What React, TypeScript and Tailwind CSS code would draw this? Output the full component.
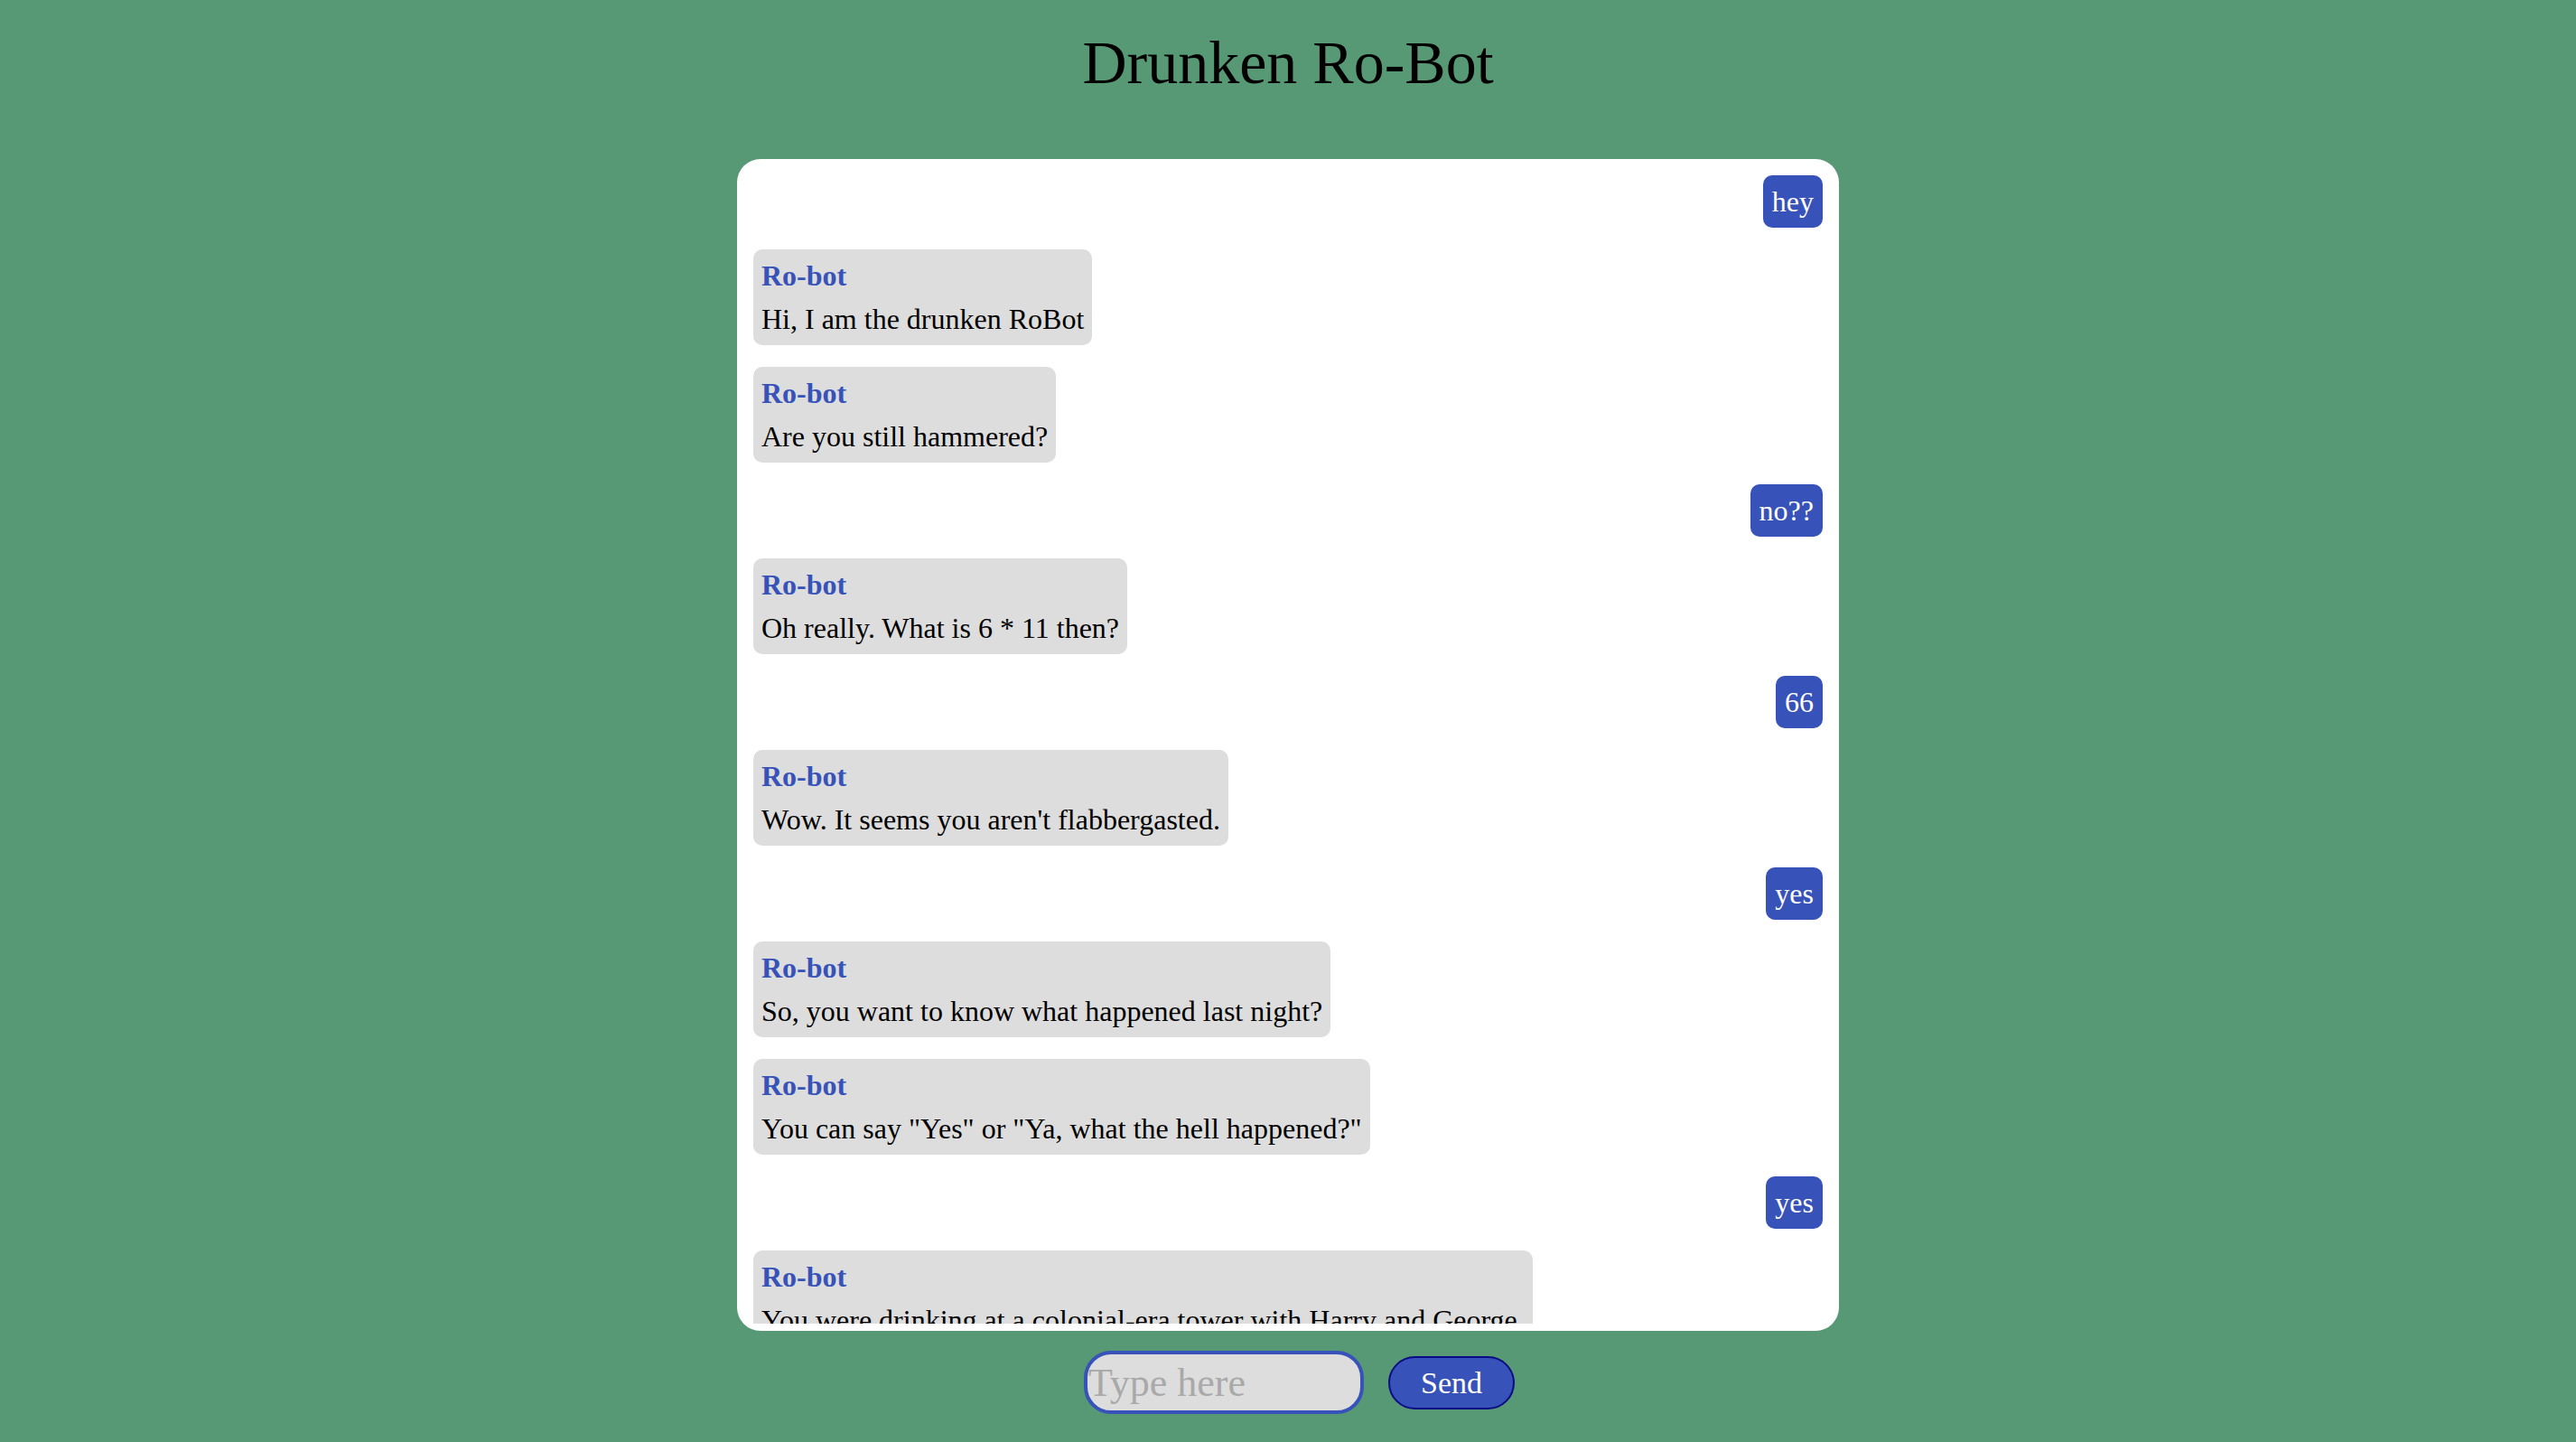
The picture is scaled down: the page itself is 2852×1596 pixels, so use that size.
import { useState } from "react";

type Message = { from: "user" | "bot"; text: string };

const MESSAGES: Message[] = [
  { from: "user", text: "hey" },
  { from: "bot", text: "Hi, I am the drunken RoBot" },
  { from: "bot", text: "Are you still hammered?" },
  { from: "user", text: "no??" },
  { from: "bot", text: "Oh really. What is 6 * 11 then?" },
  { from: "user", text: "66" },
  { from: "bot", text: "Wow. It seems you aren't flabbergasted." },
  { from: "user", text: "yes" },
  { from: "bot", text: "So, you want to know what happened last night?" },
  { from: "bot", text: 'You can say "Yes" or "Ya, what the hell happened?"' },
  { from: "user", text: "yes" },
  { from: "bot", text: "You were drinking at a colonial-era tower with Harry and George." },
];

const serif = "font-['Liberation_Serif','Times_New_Roman',serif]";

function BotBubble({ text }: { text: string }) {
  return (
    <div className="max-w-[880px] self-start rounded-[10px] bg-[#dddddd] px-[9px] py-[5px] text-[32px] leading-[48px] text-black">
      <div className="font-semibold text-[#3752b8]">Ro-bot</div>
      <div>{text}</div>
    </div>
  );
}

function UserBubble({ text }: { text: string }) {
  return (
    <div className="self-end rounded-[10px] bg-[#3752b8] px-[10px] py-[5px] text-[32px] leading-[48px] text-white">
      {text}
    </div>
  );
}

export default function App() {
  const [draft, setDraft] = useState("");

  return (
    <main className={`flex min-h-screen flex-col items-center bg-[#579974] ${serif}`}>
      <h1 className="pt-[29px] text-[68px] leading-[80px] font-normal text-black">
        Drunken Ro-Bot
      </h1>

      <section className="mt-[67px] h-[1297px] w-[1220px] rounded-[26px] bg-white p-[8px]">
        <div className="flex h-full flex-col gap-[24px] overflow-hidden px-[10px] pt-[10px]">
          {MESSAGES.map((m, i) =>
            m.from === "bot" ? (
              <BotBubble key={i} text={m.text} />
            ) : (
              <UserBubble key={i} text={m.text} />
            ),
          )}
        </div>
      </section>

      <form
        className="mt-[22px] flex items-center gap-[27px] pl-[25px]"
        onSubmit={(e) => e.preventDefault()}
      >
        <input
          value={draft}
          onChange={(e) => setDraft(e.target.value)}
          placeholder="Type here"
          className="h-[70px] w-[310px] rounded-[30px] border-4 border-[#3752b8] bg-[#dddddd] px-[1px] text-[44px] text-black placeholder:text-[#a9a9a9] focus:outline-none"
        />
        <button
          type="submit"
          className="h-[59px] w-[140px] rounded-full border-2 border-[#0b0b85] bg-[#3752b8] text-[34px] text-white"
        >
          Send
        </button>
      </form>
    </main>
  );
}
